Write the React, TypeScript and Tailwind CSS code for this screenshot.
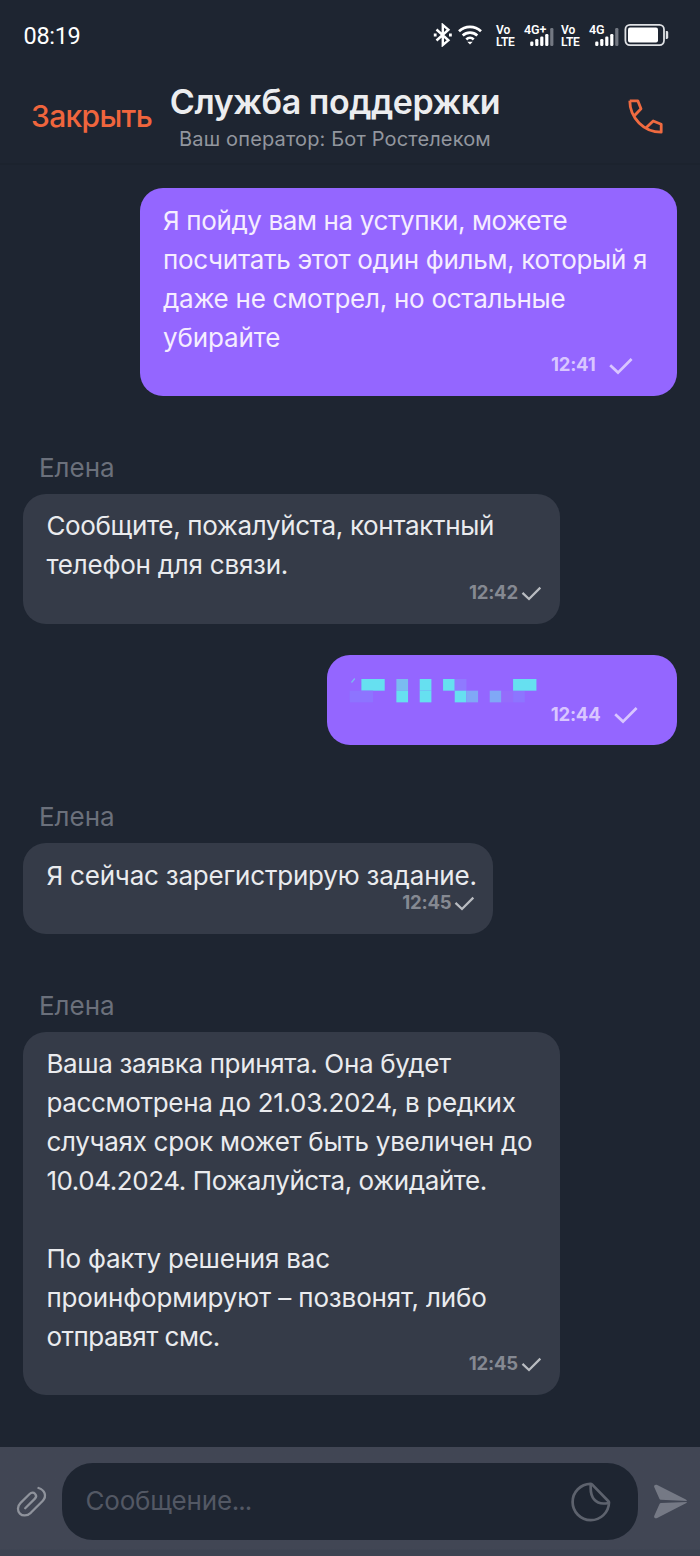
import type { ReactNode } from "react";

type LineData = { text: string; track?: string };

function Check({ className }: { className: string }) {
  return (
    <svg viewBox="0 0 24 18" className={className} fill="none" stroke="currentColor" strokeWidth="2.7">
      <path d="M1.2 8.2 9 15.6 22.6 2" />
    </svg>
  );
}

function Lines({ lines }: { lines: LineData[] }) {
  return (
    <div className="text-[26px] leading-[38.9px] font-normal whitespace-pre">
      {lines.map((l, i) => (
        <p key={i} className={l.track}>
          {l.text || " "}
        </p>
      ))}
    </div>
  );
}

function Outgoing({ width, time, pad, gap, children }: { width: string; time: string; pad: string; gap: string; children: ReactNode }) {
  return (
    <div className={`${width} self-end rounded-[23px] bg-[#9466ff] pt-[13.6px] pb-[24.4px] pl-[23px] text-[#f5edff]`}>
      {children}
      <div className={`${pad} ${gap} flex h-[14px] items-center justify-end text-[#d9c6ff]`}>
        <span className="text-[18.5px] leading-none font-bold tracking-[-0.2px]">{time}</span>
        <Check className="mt-[2px] h-[18px] w-[24px]" />
      </div>
    </div>
  );
}

function Incoming({ width, time, lines }: { width: string; time: string; lines: LineData[] }) {
  return (
    <div className="flex flex-col">
      <p className="mt-[51.7px] mb-[7.3px] pl-[15.5px] text-[26px] leading-[39px] font-normal text-[#6b707b]">Елена</p>
      <div className={`${width} rounded-[23px] bg-[#353b48] pt-[13.5px] pr-[18px] pb-[24.3px] pl-[23px] text-[#eaebee]`}>
        <Lines lines={lines} />
        <div className="flex h-[14px] items-center justify-end gap-[3px]">
          <span className="text-[18.5px] leading-none font-bold tracking-[-0.2px] text-[#858992]">{time}</span>
          <Check className="mt-[2px] h-[15px] w-[21px] text-[#b9bcc1]" />
        </div>
      </div>
    </div>
  );
}

const cells: [number, number, number, string][] = [
  [1, 0, 2, "#66e0f0"],
  [0, 1, 2, "#8d74ff"],
  [4, 0, 1, "#7abcf0"],
  [4, 1, 1, "#66e0f0"],
  [6, 0, 1, "#66e0f0"],
  [6, 1, 1, "#66e0f0"],
  [8, 0, 1, "#66e0f0"],
  [9, 0, 1, "#8f7aff"],
  [9, 1, 1, "#66e0f0"],
  [10, 1, 1, "#80a8f6"],
  [12, 1, 1, "#80a8f6"],
  [13, 1, 1, "#956cfb"],
  [14, 1, 1, "#8d75ff"],
  [14, 0, 2, "#66e0f0"],
];

function Mosaic() {
  return (
    <div className="h-[38px] pt-[8px]">
      <svg width="190" height="27" viewBox="0 0 190 27" className="-ml-px">
        {cells.map(([c, r, w, fill], i) => (
          <rect key={i} x={0.7 + c * 11.67} y={2 + r * 11.67} width={w * 11.67} height={11.67} fill={fill} />
        ))}
        <path d="M2.5 5.5 5.8 1.5" stroke="#7abcf0" strokeWidth="1.2" />
      </svg>
    </div>
  );
}

function VoLte() {
  return (
    <div className="flex w-[21px] flex-col text-[12px] leading-none font-semibold">
      <span className="h-[12px]">Vo</span>
      <span className="h-[12px] tracking-[-0.2px]">LTE</span>
    </div>
  );
}

function Signal({ label }: { label: string }) {
  return (
    <div className="relative h-[23px] w-[31px]">
      <span className="absolute top-0 left-0 text-[12.5px] leading-[12px] font-semibold tracking-[-0.1px]">{label}</span>
      <svg width="31" height="23" viewBox="0 0 31 23" fill="#fff" className="absolute inset-0">
        <rect x="6.2" y="17.5" width="3.2" height="4.5" rx="1.2" />
        <rect x="11.2" y="15" width="3.2" height="7" rx="1.2" />
        <rect x="16.2" y="12.5" width="3.2" height="9.5" rx="1.2" />
        <rect x="21.2" y="10" width="3.2" height="12" rx="1.2" />
        <rect x="26.2" y="4" width="3.2" height="18" rx="1.2" fill="#737882" />
      </svg>
    </div>
  );
}

function StatusBar() {
  return (
    <div className="flex h-[71px] items-center justify-between pr-[30px] pl-[23.5px] font-[Roboto,sans-serif] text-white">
      <span className="mt-[2px] text-[23.5px] tracking-[-0.3px]">08:19</span>
      <div className="flex items-center">
        <svg width="20" height="24" viewBox="0 0 20 24" fill="none" stroke="#fff" strokeWidth="2.4" className="-mt-px">
          <path d="M3.5 6.5 15.4 17.3 9.8 22V2L15.4 6.7 3.5 17.5" />
          <path d="M0.8 12H3.6M16 12H18.8" strokeWidth="2.8" />
        </svg>
        <svg width="24" height="22" viewBox="0 0 24 22" fill="none" stroke="#fff" strokeWidth="2.7" className="-mt-px ml-[5px]">
          <path d="M1 7.3a16 16 0 0 1 22 0M4.7 11.5a10.6 10.6 0 0 1 14.6 0M8.3 15.4a5.4 5.4 0 0 1 7.4 0" />
          <path d="M9.3 17.7h5.4L12 20.6z" fill="#fff" stroke="none" />
        </svg>
        <div className="ml-[14px]"><VoLte /></div>
        <div className="ml-[7px]"><Signal label="4G+" /></div>
        <div className="ml-[6px]"><VoLte /></div>
        <div className="ml-[7px]"><Signal label="4G" /></div>
        <svg width="46" height="24" viewBox="0 0 46 24" className="-mt-px ml-[4px]">
          <rect x="1.4" y="1.9" width="38.6" height="20.2" rx="4.5" fill="none" stroke="#dfe1e4" strokeWidth="1.8" />
          <rect x="4" y="4.5" width="30" height="15" rx="2" fill="#fff" />
          <path d="M41.8 8h1q1.4 0 1.4 1.4v5.2q0 1.4-1.4 1.4h-1z" fill="#dfe1e4" />
        </svg>
      </div>
    </div>
  );
}

function Header() {
  return (
    <header className="flex h-[92px] pl-[31px]">
      <button className="mt-[27px] h-[36px] w-[124px] text-left text-[30px] leading-[36px] font-medium tracking-[-0.65px] text-[#f0653d]">Закрыть</button>
      <div className="ml-[14px] w-[332px] text-center whitespace-nowrap">
        <h1 className="mt-[11px] text-[34px] leading-[40px] font-semibold tracking-[-0.45px] text-[#ecedef]">Служба поддержки</h1>
        <p className="mt-[4px] text-[20px] leading-[26px] font-normal tracking-[0.15px] text-[#92969e]">Ваш оператор: Бот Ростелеком</p>
      </div>
      <svg width="36" height="36" viewBox="0 0 36 36" fill="none" stroke="#ef6a40" strokeWidth="2.8" strokeLinejoin="round" className="mt-[28px] ml-[127px]">
        <path d="M1.8 1.8C1.8 19 16 33.2 33.2 33.2V25.2L25.2 22 17.3 29.6M1.8 1.8H9.8L13 9.8 5.4 17.7" />
      </svg>
    </header>
  );
}

function Composer() {
  return (
    <footer className="flex h-[109px] items-start bg-linear-to-t from-[#3c4351] from-[6px] to-[#414654] to-[7px] pt-[16px] pl-[16px]">
      <svg width="32" height="32" viewBox="0 0 32 32" fill="none" stroke="#8f939c" strokeWidth="2.3" strokeLinecap="round" className="mt-[23px] shrink-0">
        <path d="M22.5 2C28.8 4 31.2 10.2 26.6 15L14.8 26.8C11 30.4 6.3 30 3.9 27.6 1.4 25.1 1 20.4 4.6 16.9L13.6 8C15.4 6.2 17.7 6.4 19 7.7 20.4 9.1 20.4 11.2 18.7 12.9L9.2 22.3" />
      </svg>
      <div className="ml-[14px] flex h-[77px] w-[576px] items-center justify-between rounded-[31px] bg-[#1e2531] pr-[26px] pl-[23.5px]">
        <span className="-mt-[2px] text-[26px] font-normal tracking-[-0.2px] text-[#535864]">
          Сообщение<span className="tracking-[-1px]">...</span>
        </span>
        <svg width="42" height="42" viewBox="0 0 42 42" fill="none" stroke="#5d626d" strokeWidth="2.7" strokeLinejoin="round">
          <path d="M20.5 2.8A18.2 18.2 0 1 0 39 21.5C39 21 38.8 20.6 38.4 20.2L22 3.4C21.6 3 21.1 2.8 20.5 2.8Z" />
          <path d="M20.7 3V7.5C20.7 16.5 25.5 22.5 33.5 22.5Q38.5 22.5 38.8 21" />
        </svg>
      </div>
      <svg width="36" height="36" viewBox="0 0 36 36" fill="#757985" className="mt-[20px] ml-[15px] shrink-0">
        <path d="M1.3 4.2C.4 2.2 2.3 1.1 4.2 1.9L32.4 16.3Q33.7 17 33.9 18.1L7.7 16.8C7 16.7 6.7 16.3 6.4 15.7Z" />
        <path d="M1.3 32.8C.4 34.8 2.3 35.9 4.2 35.1L32.4 20.6Q33.7 19.9 33.9 18.9L7.7 20.1C7 20.2 6.7 20.7 6.4 21.3Z" />
      </svg>
    </footer>
  );
}

export default function App() {
  return (
    <div className="flex h-[1556px] w-[700px] flex-col overflow-hidden bg-[#1e2531] font-[Inter,sans-serif]">
      <StatusBar />
      <Header />
      <main className="flex flex-1 flex-col border-t-2 border-[#1c232e] pt-[23.3px] pr-[23.5px] pl-[23.4px]">
        <Outgoing width="w-[536.5px]" time="12:41" pad="pr-[44px]" gap="gap-[13px]">
          <Lines
            lines={[
              { text: "Я пойду вам на уступки, можете", track: "tracking-[-0.38px]" },
              { text: "посчитать этот один фильм, который я", track: "tracking-[-0.3px]" },
              { text: "даже не смотрел, но остальные", track: "tracking-[-0.27px]" },
              { text: "убирайте", track: "tracking-[-0.12px]" },
            ]}
          />
        </Outgoing>
        <Incoming
          width="w-[536.5px]"
          time="12:42"
          lines={[
            { text: "Сообщите, пожалуйста, контактный", track: "tracking-[-0.35px]" },
            { text: "телефон для связи.", track: "tracking-[-0.23px]" },
          ]}
        />
        <div className="mt-[31.7px] flex flex-col">
          <Outgoing width="w-[349.4px]" time="12:44" pad="pr-[39px]" gap="gap-[13px]">
            <Mosaic />
          </Outgoing>
        </div>
        <Incoming width="w-[470px]" time="12:45" lines={[{ text: "Я сейчас зарегистрирую задание.", track: "tracking-[-0.2px]" }]} />
        <Incoming
          width="w-[536.5px]"
          time="12:45"
          lines={[
            { text: "Ваша заявка принята. Она будет", track: "tracking-[-0.35px]" },
            { text: "рассмотрена до 21.03.2024, в редких", track: "tracking-[-0.32px]" },
            { text: "случаях срок может быть увеличен до", track: "tracking-[-0.28px]" },
            { text: "10.04.2024. Пожалуйста, ожидайте.", track: "tracking-[-0.42px]" },
            { text: "" },
            { text: "По факту решения вас", track: "tracking-[-0.22px]" },
            { text: "проинформируют – позвонят, либо", track: "tracking-[-0.13px]" },
            { text: "отправят смс.", track: "tracking-[-0.5px]" },
          ]}
        />
      </main>
      <Composer />
    </div>
  );
}
